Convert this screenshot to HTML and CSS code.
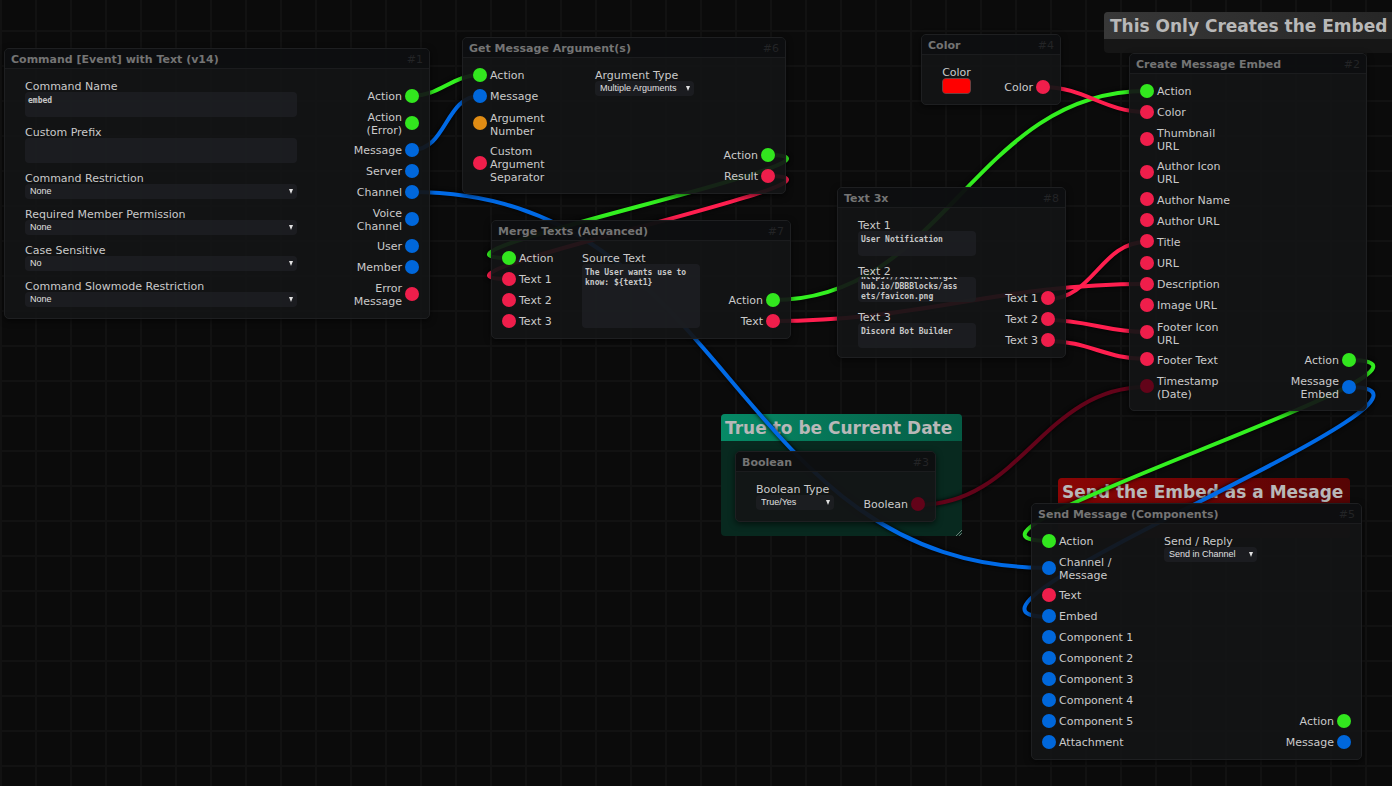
FILE: index.html
```html
<!DOCTYPE html>
<html lang="en">
<head>
<meta charset="utf-8">
<title>Bot workflow</title>
<link rel="stylesheet" href="styles.css">
</head>
<body>
<main class="canvas">
  <section class="note note-gray"><h2>This Only Creates the Embed</h2></section>
  <section class="note note-green"><h2>True to be Current Date</h2>
    <svg class="grip" viewBox="0 0 6 6"><path d="M0 6L6 0M3 6L6 3"/></svg>
  </section>
  <section class="note note-red"><h2>Send the Embed as a Mesage</h2></section>

  <svg class="wires">
    <path class="green" d="M412 96C440 96 452 75 480 75"/>
    <path class="blue" d="M412 150C447 150 445 96 480 96"/>
    <path class="blue" d="M412 192C732 192 729 568 1049 568"/>
    <path class="green" d="M767 155C892 155 384 258 509 258"/>
    <path class="red" d="M767 176C892 176 384 279 509 279"/>
    <path class="green" d="M773 300C944 300 975 91 1146 91"/>
    <path class="red" d="M773 321C923 321 996 284 1146 284"/>
    <path class="red" d="M1043 87C1085 87 1104 112 1146 112"/>
    <path class="red" d="M1048 299C1093 299 1101 242 1146 242"/>
    <path class="red" d="M1048 320C1087 320 1107 332 1146 332"/>
    <path class="red" d="M1048 341C1088 341 1106 359 1146 359"/>
    <path class="maroon" d="M918 505C1021 505 1043 387 1146 387"/>
    <path class="green" d="M1349 360C1499 360 899 541 1049 541"/>
    <path class="blue" d="M1349 387C1500 387 898 617 1049 617"/>
  </svg>

  <article class="node node-command">
    <header><h3>Command [Event] with Text (v14)</h3><span>#1</span></header>
    <div class="body">
      <div class="options">
        <div class="field"><label for="c1">Command Name</label><textarea id="c1">embed</textarea></div>
        <div class="field"><label for="c2">Custom Prefix</label><textarea id="c2"></textarea></div>
        <div class="field"><label for="c3">Command Restriction</label><div class="pick"><select id="c3"><option>None</option></select></div></div>
        <div class="field"><label for="c4">Required Member Permission</label><div class="pick"><select id="c4"><option>None</option></select></div></div>
        <div class="field"><label for="c5">Case Sensitive</label><div class="pick"><select id="c5"><option>No</option></select></div></div>
        <div class="field"><label for="c6">Command Slowmode Restriction</label><div class="pick"><select id="c6"><option>None</option></select></div></div>
      </div>
      <ul class="outputs">
        <li>Action<i class="green"></i></li>
        <li>Action<br>(Error)<i class="green"></i></li>
        <li>Message<i class="blue"></i></li>
        <li>Server<i class="blue"></i></li>
        <li>Channel<i class="blue"></i></li>
        <li>Voice<br>Channel<i class="blue"></i></li>
        <li>User<i class="blue"></i></li>
        <li>Member<i class="blue"></i></li>
        <li>Error<br>Message<i class="red"></i></li>
      </ul>
    </div>
  </article>

  <article class="node node-argument">
    <header><h3>Get Message Argument(s)</h3><span>#6</span></header>
    <div class="body">
      <ul class="inputs">
        <li><i class="green"></i>Action</li>
        <li><i class="blue"></i>Message</li>
        <li><i class="orange"></i>Argument<br>Number</li>
        <li><i class="red"></i>Custom<br>Argument<br>Separator</li>
      </ul>
      <div class="options">
        <div class="field"><label for="a1">Argument Type</label><div class="pick"><select id="a1"><option>Multiple Arguments</option></select></div></div>
      </div>
      <ul class="outputs">
        <li>Action<i class="green"></i></li>
        <li>Result<i class="red"></i></li>
      </ul>
    </div>
  </article>

  <article class="node node-merge">
    <header><h3>Merge Texts (Advanced)</h3><span>#7</span></header>
    <div class="body">
      <ul class="inputs">
        <li><i class="green"></i>Action</li>
        <li><i class="red"></i>Text 1</li>
        <li><i class="red"></i>Text 2</li>
        <li><i class="red"></i>Text 3</li>
      </ul>
      <div class="options">
        <div class="field"><label for="m1">Source Text</label><textarea id="m1" class="tall">The User wants use to know: ${text1}</textarea></div>
      </div>
      <ul class="outputs">
        <li>Action<i class="green"></i></li>
        <li>Text<i class="red"></i></li>
      </ul>
    </div>
  </article>

  <article class="node node-text">
    <header><h3>Text 3x</h3><span>#8</span></header>
    <div class="body">
      <div class="options">
        <div class="field"><label for="t1">Text 1</label><textarea id="t1">User Notification</textarea></div>
        <div class="field"><label for="t2">Text 2</label><textarea id="t2" class="scrolled">https://xcraftlm.github.io/DBBBlocks/assets/favicon.png</textarea></div>
        <div class="field"><label for="t3">Text 3</label><textarea id="t3">Discord Bot Builder</textarea></div>
      </div>
      <ul class="outputs">
        <li>Text 1<i class="red"></i></li>
        <li>Text 2<i class="red"></i></li>
        <li>Text 3<i class="red"></i></li>
      </ul>
    </div>
  </article>

  <article class="node node-color">
    <header><h3>Color</h3><span>#4</span></header>
    <div class="body">
      <div class="options">
        <div class="field"><label for="k1">Color</label><input id="k1" type="color" value="#ff0000"></div>
      </div>
      <ul class="outputs"><li>Color<i class="red"></i></li></ul>
    </div>
  </article>

  <article class="node node-embed">
    <header><h3>Create Message Embed</h3><span>#2</span></header>
    <div class="body">
      <ul class="inputs">
        <li><i class="green"></i>Action</li>
        <li><i class="red"></i>Color</li>
        <li><i class="red"></i>Thumbnail<br>URL</li>
        <li><i class="red"></i>Author Icon<br>URL</li>
        <li><i class="red"></i>Author Name</li>
        <li><i class="red"></i>Author URL</li>
        <li><i class="red"></i>Title</li>
        <li><i class="red"></i>URL</li>
        <li><i class="red"></i>Description</li>
        <li><i class="red"></i>Image URL</li>
        <li><i class="red"></i>Footer Icon<br>URL</li>
        <li><i class="red"></i>Footer Text</li>
        <li><i class="maroon"></i>Timestamp<br>(Date)</li>
      </ul>
      <ul class="outputs">
        <li>Action<i class="green"></i></li>
        <li>Message<br>Embed<i class="blue"></i></li>
      </ul>
    </div>
  </article>

  <article class="node node-boolean">
    <header><h3>Boolean</h3><span>#3</span></header>
    <div class="body">
      <div class="options">
        <div class="field"><label for="b1">Boolean Type</label><div class="pick"><select id="b1"><option>True/Yes</option></select></div></div>
      </div>
      <ul class="outputs"><li>Boolean<i class="maroon"></i></li></ul>
    </div>
  </article>

  <article class="node node-send">
    <header><h3>Send Message (Components)</h3><span>#5</span></header>
    <div class="body">
      <ul class="inputs">
        <li><i class="green"></i>Action</li>
        <li><i class="blue"></i>Channel /<br>Message</li>
        <li><i class="red"></i>Text</li>
        <li><i class="blue"></i>Embed</li>
        <li><i class="blue"></i>Component 1</li>
        <li><i class="blue"></i>Component 2</li>
        <li><i class="blue"></i>Component 3</li>
        <li><i class="blue"></i>Component 4</li>
        <li><i class="blue"></i>Component 5</li>
        <li><i class="blue"></i>Attachment</li>
      </ul>
      <div class="options">
        <div class="field"><label for="s1">Send / Reply</label><div class="pick"><select id="s1"><option>Send in Channel</option></select></div></div>
      </div>
      <ul class="outputs">
        <li>Action<i class="green"></i></li>
        <li>Message<i class="blue"></i></li>
      </ul>
    </div>
  </article>
</main>
<script src="script.js"></script>
</body>
</html>
```
FILE: styles.css
```css
* { box-sizing: border-box; }

body {
  margin: 0;
  background: #0b0b0b;
  color: #cacaca;
  font: 11px/13px "DejaVu Sans", Verdana, sans-serif;
}

h2, h3, ul { margin: 0; padding: 0; }
ul { list-style: none; }

.canvas {
  position: relative;
  height: 100vh;
  overflow: hidden;
  background-image:
    linear-gradient(90deg, #121212 2px, transparent 2px),
    linear-gradient(#121212 2px, transparent 2px);
  background-size: 35px 35px;
  background-position: 0 30px;
}

/* Wires */
.wires {
  position: absolute;
  inset: 0;
  width: 100%;
  height: 100%;
  fill: none;
  stroke-width: 4;
  filter: drop-shadow(0 0 2px #000);
}
.wires .green { stroke: #33f020; }
.wires .blue { stroke: #006ae6; }
.wires .red { stroke: #ff1f4f; }
.wires .maroon { stroke: #620319; }

/* Comment boxes */
.note {
  position: absolute;
  border-radius: 4px;
  overflow: hidden;
}
.note h2 {
  padding: 2px 4px 0;
  color: #b8b8b8;
  font-size: 17px;
  line-height: 25px;
  white-space: nowrap;
}
.note-gray { left: 1104px; top: 12px; width: 320px; height: 41px; background: #161616; }
.note-gray h2 { padding-left: 6px; background: linear-gradient(90deg, #383838, #242424); }
.note-green { left: 721px; top: 414px; width: 241px; height: 122px; background: #08291f; }
.note-green h2 { background: linear-gradient(90deg, #068a66, #055b44); }
.note-red { left: 1058px; top: 478px; width: 292px; height: 60px; background: #220505; }
.note-red h2 { background: linear-gradient(90deg, #8b0505, #560404); }
.grip {
  position: absolute;
  right: 0;
  bottom: 0;
  width: 6px;
  height: 6px;
  stroke: #6b8078;
  stroke-width: 1;
}

/* Nodes */
.node {
  position: absolute;
  display: flex;
  flex-direction: column;
  border: 1px solid #1e1f21;
  border-radius: 5px;
  background: rgba(19, 20, 22, 0.93);
  box-shadow: 0 2px 6px rgba(0, 0, 0, 0.6);
}
.node header {
  display: flex;
  justify-content: space-between;
  align-items: center;
  height: 20px;
  padding: 2px 6px 0;
  border-bottom: 1px solid #1b1c1e;
  border-radius: 4px 4px 0 0;
  background: rgba(10, 11, 13, 0.6);
}
.node h3 { color: #747474; font-size: 11px; }
.node header span { color: #232426; }

.node-command { left: 4px; top: 48px; width: 426px; min-height: 271px; }
.node-argument { left: 462px; top: 37px; width: 324px; min-height: 157px; }
.node-merge { left: 491px; top: 220px; width: 300px; }
.node-text { left: 837px; top: 187px; width: 229px; min-height: 171px; }
.node-color { left: 921px; top: 34px; width: 140px; min-height: 71px; }
.node-embed { left: 1129px; top: 53px; width: 238px; min-height: 358px; }
.node-boolean { left: 735px; top: 451px; width: 201px; min-height: 71px; }
.node-send { left: 1031px; top: 503px; width: 331px; }

.body { display: flex; flex: 1; padding: 0 10px; }
.inputs, .outputs {
  display: flex;
  flex-direction: column;
  padding: 6px 0 7px;
}
.inputs { width: 112px; justify-content: space-between; }
.node-merge .inputs { width: 70px; }
.outputs { flex: 1; justify-content: flex-end; text-align: right; }
.node-command .outputs { padding-bottom: 8px; }

.inputs li, .outputs li {
  position: relative;
  min-height: 21px;
  padding: 5px 0 2px;
  white-space: nowrap;
}
.inputs li { padding-left: 17px; }
.outputs li { padding-right: 17px; }
li i {
  position: absolute;
  top: 0;
  bottom: 0;
  width: 14px;
  height: 14px;
  margin: auto 0;
  border-radius: 50%;
}
.inputs i { left: 0; }
.outputs i { right: 0; }
i.green { background: #32e61e; }
i.blue { background: #0067db; }
i.red { background: #ef1e4b; }
i.orange { background: #e08c14; }
i.maroon { background: #620319; }

/* Fields */
.options {
  display: flex;
  flex-direction: column;
  gap: 8px;
  padding: 10px 0 9px 10px;
}
.field { display: flex; flex-direction: column; align-items: flex-start; }
.field label { height: 13px; line-height: 15px; }
.node-color .field { align-items: center; }

textarea, select {
  border: 0;
  border-radius: 4px;
  background-color: rgba(29, 30, 33, 0.9);
  color: #c8c8c8;
}
textarea {
  display: block;
  width: 118px;
  height: 25px;
  padding: 4px 3px 0;
  resize: none;
  overflow: hidden;
  font: bold 8px/10px "DejaVu Sans Mono", Consolas, monospace;
  word-break: break-all;
}
.node-command textarea { width: 272px; }
textarea.tall { height: 64px; word-break: normal; }
textarea.scrolled { padding-right: 16px; overflow-y: auto; }
.scrolled::-webkit-scrollbar { width: 6px; }
.scrolled::-webkit-scrollbar-thumb { border-radius: 3px; background: #26272a; }

.pick { position: relative; display: flex; }
.pick::after {
  content: "";
  position: absolute;
  top: 5px;
  right: 4px;
  border: 2px solid transparent;
  border-top: 5px solid #e0e0e0;
  border-bottom: 0;
}
select {
  width: 99px;
  height: 15px;
  padding: 0 5px;
  appearance: none;
  color: #e0e0e0;
  font: 9px/15px "Liberation Sans", Arial, sans-serif;
}
.node-command select { width: 272px; }
.node-send select { width: 93px; }
.node-boolean select { width: 78px; }

input[type="color"] {
  appearance: none;
  width: 29px;
  height: 16px;
  padding: 0;
  border: 1px solid #6b4040;
  border-radius: 4px;
  background: #f00;
}
input[type="color"]::-webkit-color-swatch-wrapper { padding: 0; }
input[type="color"]::-webkit-color-swatch { border: 0; border-radius: 3px; }
```
FILE: script.js
```js
document.querySelectorAll('.scrolled').forEach(function (box) {
  box.scrollTop = box.scrollHeight;
});
```
